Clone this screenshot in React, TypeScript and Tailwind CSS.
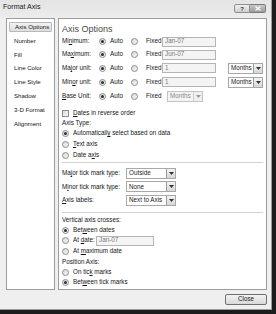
import React from "react";

const F = { fontFamily: '"Liberation Sans", Arial, sans-serif' };

function Radio({ on = false }: { on?: boolean }) {
  return (
    <span className="w-[7px] h-[7px] rounded-full border border-[#8c8c8c] bg-gradient-to-br from-[#d8d8d8] to-[#f8f8f8] flex items-center justify-center shrink-0">
      {on && <span className="w-[3px] h-[3px] rounded-full bg-[#2b2b2b]" />}
    </span>
  );
}

function Check() {
  return <span className="w-[7px] h-[7px] border border-[#8c8c8c] bg-gradient-to-br from-[#dcdcdc] to-[#f8f8f8] shrink-0" />;
}

function Field({ w, text }: { w: string; text: string }) {
  return (
    <div className={`${w} h-[10px] border border-[#b5b5b5] bg-[#f4f4f4] flex items-center pl-[2px] text-[#7a7a7a] leading-none`}>
      {text}
    </div>
  );
}

function Select({ w, text, disabled = false }: { w: string; text: string; disabled?: boolean }) {
  return (
    <div className={`${w} h-[11px] border ${disabled ? "border-[#c4c4c4] bg-[#f4f4f4]" : "border-[#a8a8a8] bg-white"} flex items-stretch leading-none`}>
      <div className={`flex-1 flex items-center pl-[2px] overflow-hidden whitespace-nowrap ${disabled ? "text-[#8a8a8a]" : "text-[#1a1a1a]"}`}>{text}</div>
      <div className={`w-[9px] border-l ${disabled ? "border-[#cfcfcf] bg-[#f0f0f0]" : "border-[#9a9a9a] bg-gradient-to-b from-[#f4f4f4] to-[#d6d6d6]"} flex items-center justify-center`}>
        <svg width="5" height="3" viewBox="0 0 5 3"><path d="M0 0 H5 L2.5 3 Z" fill={disabled ? "#9a9a9a" : "#333"} /></svg>
      </div>
    </div>
  );
}

function U({ children }: { children: React.ReactNode }) {
  return <span className="underline underline-offset-[1px] decoration-[0.6px]">{children}</span>;
}

function AxisRow({ label, fixed, select, h }: { label: React.ReactNode; fixed: string; select?: boolean; h: string }) {
  return (
    <div className={`${h} flex items-center`}>
      <div className="w-[37px] whitespace-nowrap">{label}</div>
      <div className="w-[32px] flex items-center">
        <Radio on />
        <span className="ml-[4px]">Auto</span>
      </div>
      <div className="w-[31px] flex items-center">
        <Radio />
        <span className="ml-[8px]">Fixed</span>
      </div>
      <Field w="w-[54px]" text={fixed} />
      {select && (
        <div className="ml-[12px]">
          <Select w="w-[35px]" text="Months" />
        </div>
      )}
    </div>
  );
}

function RadioLine({ on = false, children, h = "h-[11px]" }: { on?: boolean; children: React.ReactNode; h?: string }) {
  return (
    <div className={`${h} flex items-center`}>
      <Radio on={on} />
      <span className="ml-[4px] whitespace-nowrap">{children}</span>
    </div>
  );
}

function TickRow({ label, value }: { label: React.ReactNode; value: string }) {
  return (
    <div className="h-[13.5px] flex items-center">
      <div className="w-[64px] whitespace-nowrap">{label}</div>
      <Select w="w-[50px]" text={value} />
    </div>
  );
}

export default function App() {
  const items = ["Axis Options", "Number", "Fill", "Line Color", "Line Style", "Shadow", "3-D Format", "Alignment"];
  return (
    <div className="w-[276px] h-[314px] bg-[#1c1c1c] overflow-hidden" style={F}>
      <div className="w-[272px] h-[310px] bg-[#efefef] border-r border-b border-[#9c9c9c] flex flex-col text-[6.3px] text-[#151515]">
        {/* title bar */}
        <div className="h-[18px] flex items-start bg-gradient-to-b from-[#e4e4e4] to-[#ececec]">
          <div className="pl-[3px] pt-[4px] text-[7.1px] text-[#1a1a1a] leading-none">Format Axis</div>
          <div className="ml-auto mr-[5px] mt-[4px] flex">
            <div className="w-[16px] h-[9px] border border-[#8f8f8f] rounded-l-[2px] bg-gradient-to-b from-[#f0f0f0] to-[#cfcfcf] flex items-center justify-center text-[6px] leading-none text-[#333] font-bold">?</div>
            <div className="w-[16px] h-[9px] border border-l-0 border-[#7c7c7c] rounded-r-[2px] bg-gradient-to-b from-[#c8c8c8] to-[#9a9a9a] flex items-center justify-center">
              <svg width="6" height="5" viewBox="0 0 6 5"><path d="M0.5 0.5 L5.5 4.5 M5.5 0.5 L0.5 4.5" stroke="#fff" strokeWidth="1.2" /></svg>
            </div>
          </div>
        </div>
        {/* body */}
        <div className="flex pl-[6px] gap-[3px]">
          {/* left list */}
          <div className="w-[49px] h-[272px] bg-white border border-[#9d9d9d] pt-[3px] px-[2px] flex flex-col gap-[3.85px]">
            {items.map((t, i) => (
              <div
                key={t}
                className={`h-[10px] flex items-center pl-[5px] whitespace-nowrap leading-none text-[6.1px] ${i === 0 ? "border border-[#b8b8b8] rounded-[1px] bg-gradient-to-b from-[#f2f2f2] to-[#dedede] pl-[4px]" : ""}`}
              >
                {t}
              </div>
            ))}
          </div>
          {/* right panel */}
          <div className="w-[209px] h-[272px] bg-white border border-[#9d9d9d] pl-[3px] pr-[3px] pt-[4px] flex flex-col leading-none">
            <div className="h-[12px] flex items-center text-[9px] text-[#4a4a4a]">Axis Options</div>
            <AxisRow h="h-[13px]" label={<>Mi<U>n</U>imum:</>} fixed="Jan-07" />
            <AxisRow h="h-[13px]" label={<>Ma<U>x</U>imum:</>} fixed="Jun-07" />
            <AxisRow h="h-[14px]" label={<>Ma<U>j</U>or unit:</>} fixed="1" select />
            <AxisRow h="h-[14px]" label={<>Min<U>o</U>r unit:</>} fixed="1" select />
            <div className="h-[14px] flex items-center">
              <div className="w-[37px] whitespace-nowrap"><U>B</U>ase Unit:</div>
              <div className="w-[32px] flex items-center">
                <Radio on />
                <span className="ml-[4px]">Auto</span>
              </div>
              <div className="w-[31px] flex items-center">
                <Radio />
                <span className="ml-[8px]">Fixed</span>
              </div>
              <div className="ml-[5px]">
                <Select w="w-[36px]" text="Months" disabled />
              </div>
            </div>
            <div className="h-[10px] mt-[5px] flex items-center">
              <Check />
              <span className="ml-[4px]"><U>D</U>ates in reverse order</span>
            </div>
            <div className="h-[10px] flex items-center">Axis Type:</div>
            <RadioLine on>Automaticall<U>y</U> select based on data</RadioLine>
            <RadioLine><U>T</U>ext axis</RadioLine>
            <RadioLine>Date a<U>x</U>is</RadioLine>
            <div className="h-px bg-[#d0d0d0] mt-[1px] mb-[3.5px]" />
            <TickRow label={<>Ma<U>j</U>or tick mark type:</>} value="Outside" />
            <TickRow label={<>M<U>i</U>nor tick mark type:</>} value="None" />
            <TickRow label={<><U>A</U>xis labels:</>} value="Next to Axis" />
            <div className="h-px bg-[#d0d0d0] mt-[5px] mb-[2px]" />
            <div className="h-[10px] flex items-center">Vertical axis crosses:</div>
            <RadioLine on h="h-[10px]">Bet<U>w</U>een dates</RadioLine>
            <div className="h-[11px] flex items-center">
              <Radio />
              <span className="ml-[4px] w-[23px]">At <U>d</U>ate:</span>
              <Field w="w-[58px]" text="Jan-07" />
            </div>
            <RadioLine h="h-[11px]">At <U>m</U>aximum date</RadioLine>
            <div className="h-[10px] flex items-center">Position Axis:</div>
            <RadioLine h="h-[10px]">On tic<U>k</U> marks</RadioLine>
            <RadioLine on h="h-[11px]">Bet<U>w</U>een tick marks</RadioLine>
          </div>
        </div>
        {/* footer */}
        <div className="flex justify-end pr-[4px] pt-[4px]">
          <div className="w-[42px] h-[11px] border border-[#707070] rounded-[2px] bg-gradient-to-b from-[#f3f3f3] to-[#d8d8d8] flex items-center justify-center leading-none">
            Close
          </div>
        </div>
      </div>
    </div>
  );
}
